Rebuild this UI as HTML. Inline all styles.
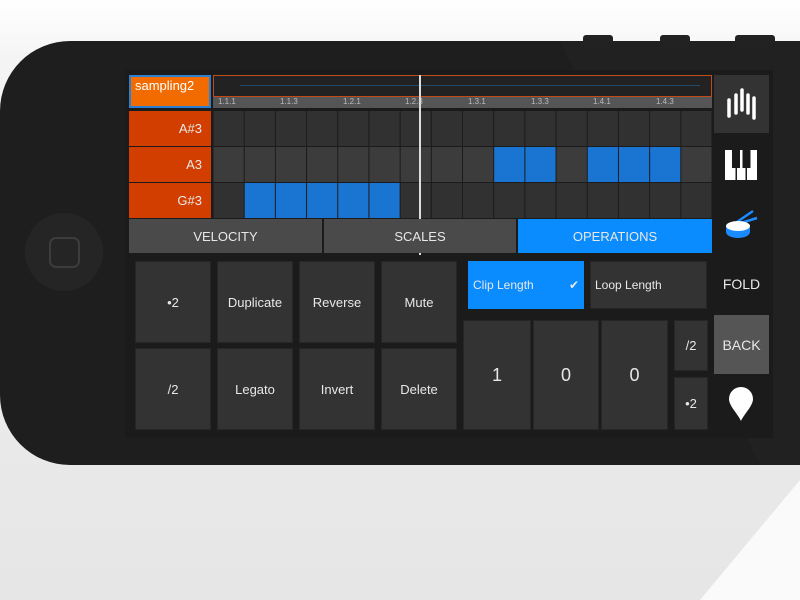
<!DOCTYPE html>
<html><head><style>
*{margin:0;padding:0;box-sizing:border-box}
body{width:800px;height:600px;overflow:hidden;background:linear-gradient(#fff 0,#f4f4f4 60px,#ececec 300px,#e6e6e6 600px);font-family:"Liberation Sans",sans-serif;position:relative}
.a{position:absolute}
.t{color:#e8e8e8;font-size:13px;display:flex;align-items:center;justify-content:center}
.btn{background:#333;border:1px solid #262626}
</style></head><body>
<svg class="a" style="left:0;top:0" width="800" height="600">
<polygon points="700,600 800,480 800,600" fill="#fafafa"/>
<rect x="583" y="35" width="30" height="10" rx="3" fill="#222"/>
<rect x="660" y="35" width="30" height="10" rx="3" fill="#222"/>
<rect x="735" y="35" width="40" height="10" rx="3" fill="#222"/>
<path d="M70,41 H800 V465 H70 A70,70 0 0 1 0,395 V111 A70,70 0 0 1 70,41Z" fill="#1e1e1e"/>
<path d="M560,41 H800 V465 H760 Z" fill="#212121"/>
<circle cx="64" cy="252" r="39" fill="#252525"/>
<rect x="50" y="238" width="29" height="29" rx="6" fill="none" stroke="#3c3c3c" stroke-width="2"/>
<rect x="125" y="70" width="648" height="368" fill="#1b1b1b"/>
</svg>
<div class="a" style="left:129px;top:75px;width:82px;height:33px;background:#f26b00;border:2px solid #2a7fd0;color:#fff;font-size:13px;padding:1px 4px">sampling2</div>
<div class="a" style="left:213px;top:75px;width:499px;height:22px;border:1px solid #c14a1a;background:#222"></div>
<div class="a" style="left:240px;top:85px;width:460px;height:1px;background:#234a6a"></div>
<div class="a" style="left:213px;top:97px;width:499px;height:11px;background:#555;color:#bbb;font-size:8px">
<span class="a" style="left:5px">1.1.1</span><span class="a" style="left:67px">1.1.3</span><span class="a" style="left:130px">1.2.1</span><span class="a" style="left:192px">1.2.3</span><span class="a" style="left:255px">1.3.1</span><span class="a" style="left:318px">1.3.3</span><span class="a" style="left:380px">1.4.1</span><span class="a" style="left:443px">1.4.3</span></div>
<div class="a t" style="left:129px;top:111px;width:82px;height:35px;background:#d23e00;justify-content:flex-end;padding-right:9px">A#3</div>
<div class="a t" style="left:129px;top:147px;width:82px;height:35px;background:#d23e00;justify-content:flex-end;padding-right:9px">A3</div>
<div class="a t" style="left:129px;top:183px;width:82px;height:35px;background:#d23e00;justify-content:flex-end;padding-right:9px">G#3</div>
<svg class="a" style="left:213px;top:111px" width="499" height="108" id="g"></svg>
<div class="a" style="left:419px;top:75px;width:2px;height:180px;background:#ddd"></div>
<div class="a t" style="left:129px;top:219px;width:193px;height:34px;background:#4a4a4a">VELOCITY</div>
<div class="a t" style="left:324px;top:219px;width:192px;height:34px;background:#4a4a4a">SCALES</div>
<div class="a t" style="left:518px;top:219px;width:194px;height:34px;background:#0a8cff">OPERATIONS</div>
<div class="a t btn" style="left:135px;top:261px;width:76px;height:82px">•2</div>
<div class="a t btn" style="left:217px;top:261px;width:76px;height:82px">Duplicate</div>
<div class="a t btn" style="left:299px;top:261px;width:76px;height:82px">Reverse</div>
<div class="a t btn" style="left:381px;top:261px;width:76px;height:82px">Mute</div>
<div class="a t btn" style="left:135px;top:348px;width:76px;height:82px">/2</div>
<div class="a t btn" style="left:217px;top:348px;width:76px;height:82px">Legato</div>
<div class="a t btn" style="left:299px;top:348px;width:76px;height:82px">Invert</div>
<div class="a t btn" style="left:381px;top:348px;width:76px;height:82px">Delete</div>
<div class="a t" style="left:468px;top:261px;width:116px;height:48px;background:#0a8cff;justify-content:space-between;padding:0 5px;font-size:12px"><span>Clip Length</span><span>✔</span></div>
<div class="a t btn" style="left:590px;top:261px;width:117px;height:48px;justify-content:flex-start;padding-left:4px;font-size:12px">Loop Length</div>
<div class="a t btn" style="left:463px;top:320px;width:68px;height:110px;font-size:18px">1</div>
<div class="a t btn" style="left:533px;top:320px;width:66px;height:110px;font-size:18px">0</div>
<div class="a t btn" style="left:601px;top:320px;width:67px;height:110px;font-size:18px">0</div>
<div class="a t btn" style="left:674px;top:320px;width:34px;height:51px">/2</div>
<div class="a t btn" style="left:674px;top:377px;width:34px;height:53px">•2</div>
<div class="a" style="left:714px;top:75px;width:55px;height:58px;background:#333"></div>
<svg class="a" style="left:725px;top:88px" width="34" height="34"><g stroke="#fff" stroke-width="3.5" stroke-linecap="round"><line x1="4" y1="12" x2="4" y2="28"/><line x1="11" y1="7" x2="11" y2="25"/><line x1="17" y1="2" x2="17" y2="22"/><line x1="23" y1="7" x2="23" y2="25"/><line x1="29" y1="10" x2="29" y2="30"/></g></svg>
<svg class="a" style="left:725px;top:150px" width="32" height="30"><rect x="0" y="0" width="32" height="30" fill="#fff"/><g fill="#1b1b1b"><rect x="10.5" y="0" width="1.5" height="30"/><rect x="20.5" y="0" width="1.5" height="30"/><rect x="7" y="0" width="8" height="18"/><rect x="17.5" y="0" width="8" height="18"/></g></svg>
<svg class="a" style="left:723px;top:208px" width="36" height="32"><g stroke="#1a8cff" stroke-width="2.5"><line x1="14" y1="14" x2="30" y2="3"/><line x1="18" y1="15" x2="34" y2="10"/></g><ellipse cx="15" cy="24" rx="12" ry="6" fill="#1a8cff"/><rect x="3" y="18" width="24" height="6" fill="#1a8cff"/><ellipse cx="15" cy="18" rx="12" ry="5" fill="#fff"/></svg>
<div class="a t" style="left:714px;top:270px;width:55px;height:28px;font-size:14px">FOLD</div>
<div class="a t" style="left:714px;top:315px;width:55px;height:59px;background:#555;font-size:14px">BACK</div>
<svg class="a" style="left:728px;top:386px" width="26" height="36"><path d="M13,1 A12,12 0 0 1 25,13 C25,20 16,28 13,35 C10,28 1,20 1,13 A12,12 0 0 1 13,1Z" fill="#fff"/></svg>
<script>
var g=document.getElementById('g'),s='';
var blue={1:[9,10,12,13,14],2:[1,2,3,4,5]};
for(var r=0;r<3;r++)for(var c=0;c<16;c++){var w=499/16;var b=(blue[r]||[]).indexOf(c)>=0;
s+='<rect x="'+(c*w+0.5)+'" y="'+(r*36)+'" width="'+(w-1)+'" height="35" fill="'+(b?'#1a74d2':(r==1?'#3c3c3c':'#313131'))+'"/>';}
g.innerHTML=s;
</script>
</body></html>
